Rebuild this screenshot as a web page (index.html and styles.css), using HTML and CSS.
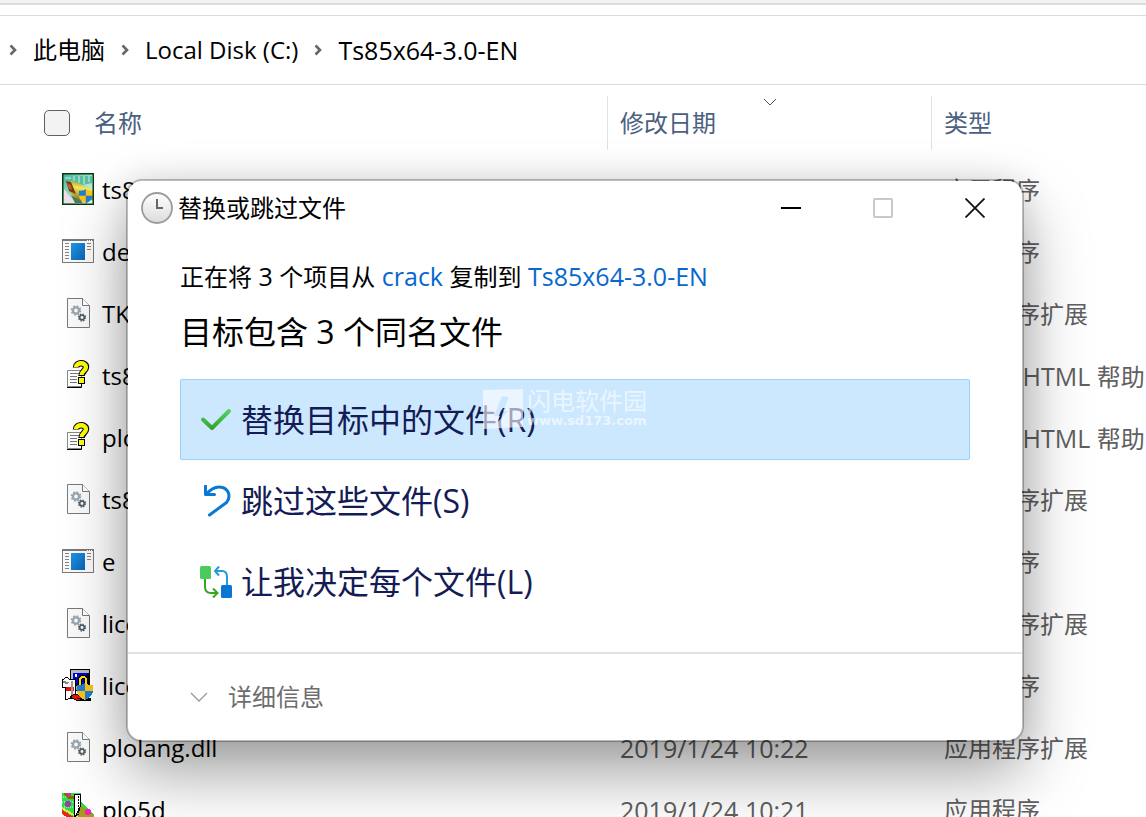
FILE: index.html
```html
<!DOCTYPE html>
<html lang="zh-CN">
<head>
<meta charset="utf-8">
<title>替换或跳过文件</title>
<link rel="stylesheet" href="styles.css">
</head>
<body>
<svg class="sprite" aria-hidden="true">
  <defs>
    <linearGradient id="blue" x1="0" y1="0" x2="1" y2="1"><stop offset="0" stop-color="#1f95e6"/><stop offset="1" stop-color="#0b63b5"/></linearGradient>
    <linearGradient id="green" x1="0" y1="0" x2="0" y2="1"><stop offset="0" stop-color="#52cf60"/><stop offset="1" stop-color="#36a52c"/></linearGradient>
    <linearGradient id="face" x1="0" y1="0" x2="0" y2="1"><stop offset="0" stop-color="#fff"/><stop offset="1" stop-color="#dcdcdc"/></linearGradient>
    <linearGradient id="teal" x1="0" y1="0" x2="1" y2="1"><stop offset="0" stop-color="#3fae94"/><stop offset=".4" stop-color="#8fdac4"/><stop offset="1" stop-color="#f2fbf4"/></linearGradient>
    <linearGradient id="roll" x1=".6" y1="0" x2=".4" y2="1"><stop offset="0" stop-color="#b09a18"/><stop offset=".35" stop-color="#fbe858"/><stop offset="1" stop-color="#8a6a10"/></linearGradient>
    <g id="gear">
      <circle r="3.4" fill="none" stroke="currentColor" stroke-width="2.6"/>
      <circle r="5" fill="none" stroke="currentColor" stroke-width="1.8" stroke-dasharray="2 1.93"/>
    </g>
    <g id="shield">
      <path d="M8 0C10 2 13 2 16 2V8C16 12 12 15 8 17C4 15 0 12 0 8V2C3 2 6 2 8 0Z" fill="#fcc419"/>
      <path d="M8 0C6 2 3 2 0 2V8H8ZM8 8H16C16 12 12 15 8 17Z" fill="#1f80d4"/>
    </g>
    <symbol id="i-dll" viewBox="0 0 32 32">
      <path d="M5.500 1.500H20.500L27.500 8.500V30.500H5.500Z" fill="#fafafa" stroke="#77797b"/>
      <path d="M20.500 1.500V8.500H27.500" fill="#fff" stroke="#77797b"/>
      <g transform="translate(14 13.500)" color="#9ba6af"><use href="#gear" transform="scale(.9)"/></g>
      <g transform="translate(20 20.500)" color="#515e67"><use href="#gear" transform="scale(.7)"/></g>
    </symbol>
    <symbol id="i-exe" viewBox="0 0 32 32">
      <rect x=".5" y="4.500" width="31" height="23" fill="#fafafa" stroke="#77797b"/>
      <path d="M1 5.500H31" stroke="#77797b"/>
      <path d="M25 5.500H30" stroke="#fff" stroke-dasharray="1 1"/>
      <rect x="9" y="8" width="14" height="17" fill="url(#blue)"/>
      <path d="M3 8.500H7M3 11.500H7M3 14.500H7M3 17.500H7M3 20.500H7M3 23.500H7M25 8.500H29M25 11.500H29M25 14.500H29" stroke="#858585"/>
    </symbol>
    <symbol id="i-help" viewBox="0 0 32 32">
      <path d="M5.500 11.500H19.500V27.500H5.500Z" fill="#fff" stroke="#888"/>
      <path d="M5 28.500H19.500V22" fill="none" stroke="#000"/>
      <path d="M8 14.500H17M8 17.500H15M8 20.500H15M8 23.500H15" stroke="#777"/>
      <path d="M14 8.500C14 3 24 3 24 8C24 12 19.500 12 19.500 17" fill="none" stroke="#000" stroke-width="6.500"/>
      <rect x="16" y="18" width="7" height="7" fill="#000"/>
      <path d="M14 8C14 3 24 3 24 8C24 12 19.500 12 19.500 16" fill="none" stroke="#ffff00" stroke-width="4.300"/>
      <rect x="17" y="19" width="5" height="5" fill="#ffff00"/>
    </symbol>
    <symbol id="i-app" viewBox="0 0 32 32">
      <rect x=".5" y=".5" width="31" height="31" fill="url(#teal)"/>
      <path d="M2 8L8 3H30V10L20 12L10 8Z" fill="#58bfa2"/>
      <path d="M12 3V8M17 3V10M22 3V11M27 3V9M3 5H9" stroke="#c9f3e6"/>
      <path d="M2 16L8 24L14 30H2Z" fill="#f0dfe9"/>
      <path d="M5 8L13 9L31 17V27L18 28L7 19Z" fill="url(#roll)"/>
      <path d="M4 8L9 9L14 21L7 18Z" fill="#6d3d18"/>
      <path d="M5 10L9 12L10 17L7 16Z" fill="#c05a28"/>
      <path d="M9 22L18 27L21 30H13Z" fill="#4c7a58"/>
      <use href="#shield" transform="translate(17 16) scale(.85)"/>
      <rect x=".75" y=".75" width="30.500" height="30.500" fill="none" stroke="#073c0c" stroke-width="1.500"/>
    </symbol>
    <symbol id="i-license" viewBox="0 0 32 32" shape-rendering="crispEdges">
      <path d="M8 0H28V19H8Z" fill="#000"/><path d="M9 1H27V4H12V16H9Z" fill="#bbb"/>
      <path d="M11 4H25V15H11Z" fill="#0000dc"/><path d="M13 5H15V8H13Z" fill="#fff"/>
      <path d="M10 16H28V21H10Z" fill="#aaa" stroke="#000"/>
      <path d="M0 11L5 8L8 11L13 10V28L3 31V18H0Z" fill="#fff" stroke="#000"/>
      <path d="M4 18H12V22H4Z" fill="#ef1010"/><path d="M1 12L7 13L5 15L1 14Z" fill="#888"/>
      <path d="M10 12V27" stroke="#999" stroke-width="2"/>
      <path d="M13 25L21 28V31H14L8 28Z" fill="#f01010" stroke="#000"/><path d="M14 29H29V32H22Z" fill="#000"/>
      <path d="M18 16V11Q18 8 21 8Q24 8 24 11V16" fill="none" stroke="#000" stroke-width="4"/>
      <path d="M18 16V11Q18 8 21 8Q24 8 24 11V16" fill="none" stroke="#ffe400" stroke-width="2"/>
      <use href="#shield" transform="translate(15 14)"/>
    </symbol>
    <symbol id="i-plot" viewBox="0 0 32 32" shape-rendering="crispEdges">
      <path d="M0 0H19V9L32 21V32H25L0 17Z" fill="#2ede48"/>
      <path d="M1 4H12M0 9H12M2 14H12" stroke="#8fe8b0" stroke-width="2" stroke-dasharray="1 1"/>
      <path d="M3 0Q6 6 12 4" fill="none" stroke="#8b6800" stroke-width="3"/>
      <circle cx="7" cy="1" r="2.500" fill="#d22abd"/><circle cx="6" cy="11" r="3" fill="#9a40a7"/>
      <path d="M18 12L32 22V32H26L16 23Z" fill="#a89a1c"/><circle cx="26" cy="19" r="3" fill="#f222b6"/>
      <path d="M0 17L25 32H18L0 21Z" fill="#ff1818"/><path d="M0 15L25 30" stroke="#f2e83c" stroke-width="2"/>
      <path d="M13 1H18V14L12 26Z" fill="#fff" stroke="#000"/><path d="M16 3V22M18 16L12 27" stroke="#000" stroke-dasharray="2 1"/>
    </symbol>
    <symbol id="i-crumb" viewBox="0 0 8 12"><path d="M1.500 1.500L6 6L1.500 10.500" fill="none" stroke="#666" stroke-width="2.600"/></symbol>
  </defs>
</svg>

<main class="explorer">
  <div class="tab-strip"></div>
  <nav class="address-bar" aria-label="路径">
    <svg class="crumb-arrow"><use href="#i-crumb"/></svg>
    <a class="crumb" href="#pc">此电脑</a>
    <svg class="crumb-arrow"><use href="#i-crumb"/></svg>
    <a class="crumb" href="#disk">Local Disk (C:)</a>
    <svg class="crumb-arrow"><use href="#i-crumb"/></svg>
    <a class="crumb latin" href="#folder">Ts85x64-3.0-EN</a>
  </nav>

  <table class="files">
    <colgroup><col class="col-name"><col class="col-date"><col class="col-type"></colgroup>
    <thead>
      <tr>
        <th scope="col"><div class="head head-name"><input class="select-all" type="checkbox" id="select-all"><label for="select-all">名称</label></div></th>
        <th scope="col"><div class="head head-split">修改日期
          <svg class="sort-mark" viewBox="0 0 14 8" aria-hidden="true"><path d="M1 1L7 7L13 1" fill="none" stroke="#555"/></svg></div></th>
        <th scope="col"><div class="head head-split">类型</div></th>
      </tr>
    </thead>
    <tbody>
      <tr><td><div class="file"><svg class="file-icon"><use href="#i-app"/></svg>ts85</div></td><td class="latin">2019/1/24 10:22</td><td>应用程序</td></tr>
      <tr><td><div class="file"><svg class="file-icon"><use href="#i-exe"/></svg>de</div></td><td></td><td>应用程序</td></tr>
      <tr><td><div class="file"><svg class="file-icon"><use href="#i-dll"/></svg>TK</div></td><td></td><td>应用程序扩展</td></tr>
      <tr><td><div class="file"><svg class="file-icon"><use href="#i-help"/></svg>ts85</div></td><td></td><td>编译的<span class="latin"> HTML </span>帮助</td></tr>
      <tr><td><div class="file"><svg class="file-icon"><use href="#i-help"/></svg>plo</div></td><td></td><td>编译的<span class="latin"> HTML </span>帮助</td></tr>
      <tr><td><div class="file"><svg class="file-icon"><use href="#i-dll"/></svg>ts85</div></td><td></td><td>应用程序扩展</td></tr>
      <tr><td><div class="file"><svg class="file-icon"><use href="#i-exe"/></svg>e</div></td><td></td><td>应用程序</td></tr>
      <tr><td><div class="file"><svg class="file-icon"><use href="#i-dll"/></svg>lice</div></td><td></td><td>应用程序扩展</td></tr>
      <tr><td><div class="file"><svg class="file-icon"><use href="#i-license"/></svg>lice</div></td><td></td><td>应用程序</td></tr>
      <tr><td><div class="file"><svg class="file-icon"><use href="#i-dll"/></svg>plolang.dll</div></td><td class="latin">2019/1/24 10:22</td><td>应用程序扩展</td></tr>
      <tr><td><div class="file"><svg class="file-icon"><use href="#i-plot"/></svg>plo5d</div></td><td class="latin">2019/1/24 10:21</td><td>应用程序</td></tr>
    </tbody>
  </table>
</main>

<section class="dialog" role="dialog" aria-labelledby="dialog-title">
  <header class="title-bar">
    <svg class="clock" viewBox="0 0 32 32" aria-hidden="true">
      <circle cx="16" cy="16" r="15" fill="url(#face)" stroke="#9b9b9b" stroke-width="1.800"/>
      <path d="M16 7V16H22" fill="none" stroke="#666" stroke-width="2"/>
    </svg>
    <h1 class="title" id="dialog-title">替换或跳过文件</h1>
    <button class="control" type="button" aria-label="最小化"><svg viewBox="0 0 20 20"><path d="M0 10H20" stroke="#000" stroke-width="2"/></svg></button>
    <button class="control" type="button" aria-label="最大化" disabled><svg viewBox="0 0 20 20"><rect x="1" y="1" width="18" height="18" rx="1" fill="none" stroke="#c8c8c8" stroke-width="2"/></svg></button>
    <button class="control" type="button" aria-label="关闭"><svg viewBox="0 0 20 20"><path d="M.5 .5L19.500 19.500M19.500 .5L.5 19.500" stroke="#111" stroke-width="1.800"/></svg></button>
  </header>
  <div class="content">
    <p class="status">正在将<span class="latin"> 3 </span>个项目从<span class="latin"> <a href="#crack">crack</a> </span>复制到<span class="latin"> <a href="#folder">Ts85x64-3.0-EN</a></span></p>
    <h2 class="question">目标包含 3 个同名文件</h2>
    <div class="choices">
      <button class="choice choice-active" type="button">
        <svg class="choice-icon" viewBox="0 0 32 32" aria-hidden="true"><path d="M3 15.500L12 24L29 7" fill="none" stroke="url(#green)" stroke-width="4" stroke-linejoin="round" stroke-linecap="round"/></svg>
        <span>替换目标中的文件(R)</span>
      </button>
      <button class="choice" type="button">
        <svg class="choice-icon" viewBox="0 0 32 32" aria-hidden="true"><path d="M5.500 1V9.500H14.500M6 9.500C12 2.500 17 1 22.500 2.500C29 4.500 31 12 26.500 17.500L9.500 30" fill="none" stroke="#0b78d4" stroke-width="3" stroke-linecap="round" stroke-linejoin="round"/></svg>
        <span>跳过这些文件(S)</span>
      </button>
      <button class="choice" type="button">
        <svg class="choice-icon" viewBox="0 0 32 32" aria-hidden="true">
          <rect width="11" height="13" rx="1.500" fill="#4bcb5c"/><rect x="21" y="19" width="11" height="13" rx="1.500" fill="#0877d1"/>
          <path d="M19 .5L15 5L19 9.500M15.500 5H22Q27 5 27 11V19" fill="none" stroke="#249add" stroke-width="2"/>
          <path d="M5 13V21Q5 27 11 27H17M13 22.500L17.500 27L13 31.500" fill="none" stroke="#36a51f" stroke-width="2"/>
        </svg>
        <span>让我决定每个文件(L)</span>
      </button>
    </div>
  </div>
  <footer class="details-bar">
    <button class="details" type="button"><svg viewBox="0 0 18 10" aria-hidden="true"><path d="M1 1L9 9L17 1" fill="none" stroke="#999" stroke-width="1.300"/></svg>详细信息</button>
  </footer>
  <div class="watermark">
    <svg viewBox="0 0 40 40" aria-hidden="true"><path fill="#fff" fill-rule="evenodd" d="M0 1L40 0V38L0 40ZM19 7L11 27H17L13 35L25 22H20L26 8Z"/></svg>
    <div class="mark-text"><span class="mark-name">闪电软件园</span><span class="mark-url">www.sd173.com</span></div>
  </div>
</section>
</body>
</html>
```
FILE: styles.css
```css
* { box-sizing: border-box; }

body {
  position: relative;
  height: 100vh;
  margin: 0;
  overflow: hidden;
  background: #fff;
  color: #000;
  font: 24px/36px "Open Sans", "Noto Sans CJK SC", sans-serif;
}

a { color: inherit; text-decoration: none; }
button { margin: 0; padding: 0; border: 0; background: none; font: inherit; }
.sprite { position: absolute; width: 0; height: 0; }
.latin { font-size: 25px; }

.tab-strip {
  height: 16px;
  border-top: 3px solid #f2f2f2;
  border-bottom: 1px solid #d9dada;
  box-shadow: inset 0 2px #dcdcdc;
}

.address-bar {
  display: flex;
  align-items: center;
  gap: 16px;
  height: 69px;
  padding-left: 9px;
  border-bottom: 1px solid #d9dada;
  white-space: nowrap;
}
.crumb-arrow { flex: none; width: 8px; height: 12px; }

.files {
  width: 100%;
  table-layout: fixed;
  border-collapse: collapse;
  white-space: nowrap;
  color: #606060;
}
.col-name { width: 607px; }
.col-date { width: 324px; }
.files th { height: 74px; padding: 2px 0 0; font-weight: 400; text-align: left; color: #4b6181; }
.files td { height: 62px; padding: 0 0 0 13px; }
.head { display: flex; align-items: center; height: 54px; }
.head-name { gap: 24px; padding-left: 44px; }
.head-split { position: relative; padding-left: 12px; border-left: 1px solid #e2e2e2; }
.sort-mark { position: absolute; top: 2px; left: 50%; width: 14px; height: 8px; margin-left: -7px; }
.select-all {
  appearance: none;
  width: 26px;
  height: 26px;
  margin: 0;
  border: 1px solid #5f5f5f;
  border-radius: 5px;
  background: #f3f3f3;
}
.file { display: flex; align-items: center; gap: 8px; padding-left: 49px; color: #000; }
.file-icon { flex: none; width: 32px; height: 32px; margin-bottom: 2px; }

.dialog {
  position: absolute;
  top: 179px;
  right: 122px;
  left: 126px;
  border: 2px solid rgba(0, 0, 0, 0.26);
  border-radius: 16px;
  background: #fff;
  background-clip: padding-box;
  box-shadow: 0 32px 64px rgba(0, 0, 0, 0.36), 0 0 32px rgba(0, 0, 0, 0.1);
}
.title-bar { display: flex; align-items: center; height: 54px; padding: 0 1px 0 13px; }
.clock { flex: none; width: 32px; height: 32px; margin-right: 5px; }
.title { flex: 1; margin: 0; font-size: 24px; font-weight: 400; }
.control { display: grid; place-items: center; width: 92px; height: 54px; }
.control svg { width: 20px; height: 20px; }

.content { padding: 23px 52px 30px; }
.status { margin: 0 0 13px; }
.status a { color: #0667cf; }
.question { margin: 0 0 23px; font-size: 32px; font-weight: 400; line-height: 48px; }
.choice {
  display: flex;
  align-items: center;
  gap: 9px;
  width: 100%;
  height: 81px;
  padding-left: 19px;
  border: 1px solid transparent;
  border-radius: 2px;
  color: #151c55;
  font-size: 32px;
  line-height: 48px;
}
.choice-active { border-color: #99d1ff; background: #cce8ff; }
.choice-icon { flex: none; width: 32px; height: 32px; }

.details-bar { height: 88px; padding: 25px 62px; border-top: 2px solid #e2e2e2; }
.details { display: flex; align-items: center; gap: 20px; color: #6d6d6d; }
.details svg { width: 18px; height: 10px; }

.watermark {
  position: absolute;
  top: 208px;
  left: 355px;
  display: flex;
  gap: 4px;
  color: #fff;
  opacity: 0.6;
  pointer-events: none;
}
.watermark svg { width: 40px; height: 40px; }
.mark-text { display: flex; flex-direction: column; }
.mark-name { font-size: 24px; line-height: 24px; }
.mark-url { font: bold 13px/16px "DejaVu Sans", sans-serif; }
```
